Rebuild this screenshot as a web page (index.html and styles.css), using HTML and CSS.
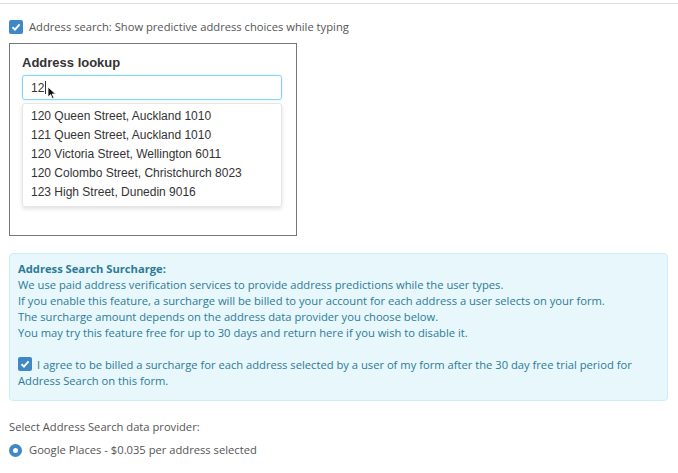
FILE: index.html
```html
<!DOCTYPE html>
<html lang="en">
<head>
    <meta charset="UTF-8">
    <meta name="viewport" content="width=device-width, initial-scale=1.0">
    <title>Address Search Settings</title>
    <link rel="stylesheet" href="styles.css">
</head>
<body>
    <div class="top-rule"></div>
    <div class="page">
        <label class="check-row">
            <span class="check-box"><svg viewBox="0 0 14 14" width="14" height="14"><path d="M3.5 7.2 L6 9.6 L10.6 4.4" fill="none" stroke="#fff" stroke-width="2"/></svg></span>
            <span>Address search: Show predictive address choices while typing</span>
        </label>

        <div class="preview">
            <div class="lookup-label">Address lookup</div>
            <div class="lookup-input">
                <span>12</span><span class="caret"></span>
                <svg class="pointer" viewBox="0 0 10 14" width="10" height="14"><path d="M1 1 L1 11 L3.6 8.6 L5.4 12.6 L7 11.9 L5.2 8 L8.6 8 Z" fill="#111" stroke="#fff" stroke-width="0.8"/></svg>
            </div>
            <ul class="suggestions">
                <li>120 Queen Street, Auckland 1010</li>
                <li>121 Queen Street, Auckland 1010</li>
                <li>120 Victoria Street, Wellington 6011</li>
                <li>120 Colombo Street, Christchurch 8023</li>
                <li>123 High Street, Dunedin 9016</li>
            </ul>
        </div>

        <div class="info">
            <div class="info-title">Address Search Surcharge:</div>
            <div>We use paid address verification services to provide address predictions while the user types.</div>
            <div>If you enable this feature, a surcharge will be billed to your account for each address a user selects on your form.</div>
            <div>The surcharge amount depends on the address data provider you choose below.</div>
            <div>You may try this feature free for up to 30 days and return here if you wish to disable it.</div>
            <label class="agree">
                <span class="check-box"><svg viewBox="0 0 14 14" width="14" height="14"><path d="M3.5 7.2 L6 9.6 L10.6 4.4" fill="none" stroke="#fff" stroke-width="2"/></svg></span>
                I agree to be billed a surcharge for each address selected by a user of my form after the 30 day free trial period for Address Search on this form.
            </label>
        </div>

        <div class="provider-label">Select Address Search data provider:</div>
        <label class="radio-row">
            <span class="radio"></span>
            <span>Google Places - $0.035 per address selected</span>
        </label>
    </div>
</body>
</html>
```

FILE: styles.css
```css
body {
    margin: 0;
    padding: 0;
    background-color: #fff;
    font-family: 'Open Sans', 'Noto Sans', sans-serif;
    font-size: 11.2px;
    color: #555;
}

.top-rule {
    margin-top: 3px;
    border-top: 1px solid #ddd;
}

.page {
    padding: 0 10px 0 9px;
}

.check-row {
    display: flex;
    align-items: center;
    gap: 6px;
    margin-top: 16px;
    height: 14px;
    line-height: 16px;
}

.check-box {
    display: inline-flex;
    flex: none;
    width: 14px;
    height: 14px;
    border-radius: 2px;
    background-color: #3f87c7;
}

.preview {
    box-sizing: border-box;
    width: 288px;
    height: 193px;
    margin-top: 9px;
    padding: 11px 14px 0 12px;
    border: 1px solid #777;
    font-family: 'Liberation Sans', Arial, sans-serif;
}

.lookup-label {
    font-size: 13px;
    font-weight: bold;
    color: #333;
    line-height: 16px;
}

.lookup-input {
    position: relative;
    box-sizing: border-box;
    display: flex;
    align-items: center;
    height: 25px;
    margin-top: 4px;
    padding-left: 8px;
    border: 1px solid #86d6f5;
    border-radius: 3px;
    box-shadow: 0 0 2px rgba(102, 200, 240, 0.5);
    font-size: 12px;
    color: #333;
}

.caret {
    display: inline-block;
    width: 1px;
    height: 13px;
    margin-left: 1px;
    background-color: #333;
}

.pointer {
    position: absolute;
    left: 24px;
    top: 10px;
}

.suggestions {
    list-style: none;
    margin: 3px 0 0 0;
    padding: 3px 0 4px 0;
    border: 1px solid #e6e6e6;
    border-radius: 3px;
    box-shadow: 0 2px 4px rgba(0, 0, 0, 0.12);
    font-size: 12px;
    color: #333;
}

.suggestions li {
    padding-left: 8px;
    line-height: 19px;
}

.info {
    margin-top: 17px;
    padding: 7px 8px 11px 8px;
    background-color: #e7f7fc;
    border: 1px solid #cdeef8;
    border-radius: 4px;
    color: #2d7b95;
    line-height: 16px;
}

.info-title {
    font-weight: bold;
}

.agree {
    display: block;
    margin-top: 16px;
}

.agree .check-box {
    vertical-align: -2px;
    margin-right: 2px;
}

.provider-label {
    margin-top: 18px;
    line-height: 16px;
}

.radio-row {
    display: flex;
    align-items: center;
    gap: 7px;
    margin-top: 7px;
    line-height: 16px;
}

.radio {
    box-sizing: border-box;
    flex: none;
    width: 13px;
    height: 13px;
    border-radius: 50%;
    border: 4px solid #3f87c7;
    background-color: #fff;
}
```
